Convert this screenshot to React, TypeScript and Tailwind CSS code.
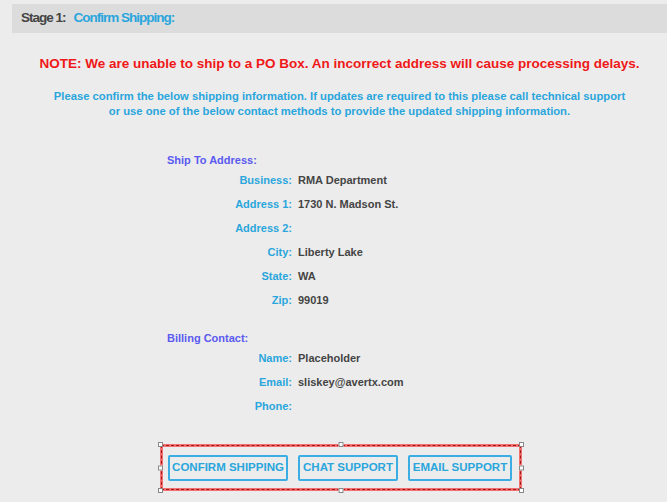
const shipTo: [string, string][] = [
  ["Business:", "RMA Department"],
  ["Address 1:", "1730 N. Madson St."],
  ["Address 2:", ""],
  ["City:", "Liberty Lake"],
  ["State:", "WA"],
  ["Zip:", "99019"],
];

const billing: [string, string][] = [
  ["Name:", "Placeholder"],
  ["Email:", "sliskey@avertx.com"],
  ["Phone:", ""],
];

function Rows({ rows }: { rows: [string, string][] }) {
  return (
    <div className="mt-[1px] flex flex-col">
      {rows.map(([label, value]) => (
        <div key={label} className="flex h-6 items-center">
          <span className="w-[126px] pr-[1px] text-right text-[#2aa6dd]">{label}</span>
          <span className="pl-[5px] text-[#444]">{value}</span>
        </div>
      ))}
    </div>
  );
}

function Handle({ className }: { className: string }) {
  return <div className={`absolute h-[5px] w-[5px] border border-[#888] bg-white ${className}`} />;
}

export default function App() {
  return (
    <div
      className="h-[502px] w-[667px] overflow-hidden bg-[#ececec] pl-3 pt-[4px] text-[11px] font-bold"
      style={{ fontFamily: '"Liberation Sans", Arial, sans-serif' }}
    >
      <div className="flex h-[29px] items-center gap-[8px] bg-[#dcdcdc] pl-[9px] text-[13.5px] tracking-[-1px]">
        <span className="text-[#444]">Stage 1:</span>
        <span className="text-[#2aa6dd]">Confirm Shipping:</span>
      </div>

      <p className="mt-[23px] text-center text-[13.5px] leading-4 text-[#f01818]">
        NOTE: We are unable to ship to a PO Box. An incorrect address will cause processing delays.
      </p>

      <p className="mt-[17px] text-center text-[11.25px] leading-[15px] text-[#2aa6dd]">
        Please confirm the below shipping information. If updates are required to this please call technical support
        <br />
        or use one of the below contact methods to provide the updated shipping information.
      </p>

      <div className="ml-[155px] mt-[34px]">
        <p className="leading-[14px] text-[#5a5af0]">Ship To Address:</p>
        <Rows rows={shipTo} />
        <p className="mt-[19px] leading-[14px] text-[#5a5af0]">Billing Contact:</p>
        <Rows rows={billing} />
      </div>

      <div className="relative ml-[148px] mt-[26px] flex h-[47px] w-[362px] items-center gap-[10px] pl-[8px]">
        <button className="h-[26px] w-[120px] whitespace-nowrap rounded-[2px] border-2 border-[#3aaee2] text-[11.5px] text-[#2aa6dd]">
          CONFIRM SHIPPING
        </button>
        <button className="h-[26px] w-[100px] whitespace-nowrap rounded-[2px] border-2 border-[#3aaee2] text-[11.5px] text-[#2aa6dd]">
          CHAT SUPPORT
        </button>
        <button className="h-[26px] w-[104px] whitespace-nowrap rounded-[2px] border-2 border-[#3aaee2] text-[11.5px] text-[#2aa6dd]">
          EMAIL SUPPORT
        </button>

        <div className="pointer-events-none absolute inset-0 border-[3px] border-[#f37070]">
          <div className="absolute -inset-[2px] border border-dashed border-[#a01818]" />
        </div>
        <Handle className="-left-[2px] -top-[2px]" />
        <Handle className="left-1/2 -top-[2px] -translate-x-1/2" />
        <Handle className="-right-[2px] -top-[2px]" />
        <Handle className="-left-[2px] top-1/2 -translate-y-1/2" />
        <Handle className="-right-[2px] top-1/2 -translate-y-1/2" />
        <Handle className="-left-[2px] -bottom-[2px]" />
        <Handle className="left-1/2 -bottom-[2px] -translate-x-1/2" />
        <Handle className="-right-[2px] -bottom-[2px]" />
      </div>
    </div>
  );
}
